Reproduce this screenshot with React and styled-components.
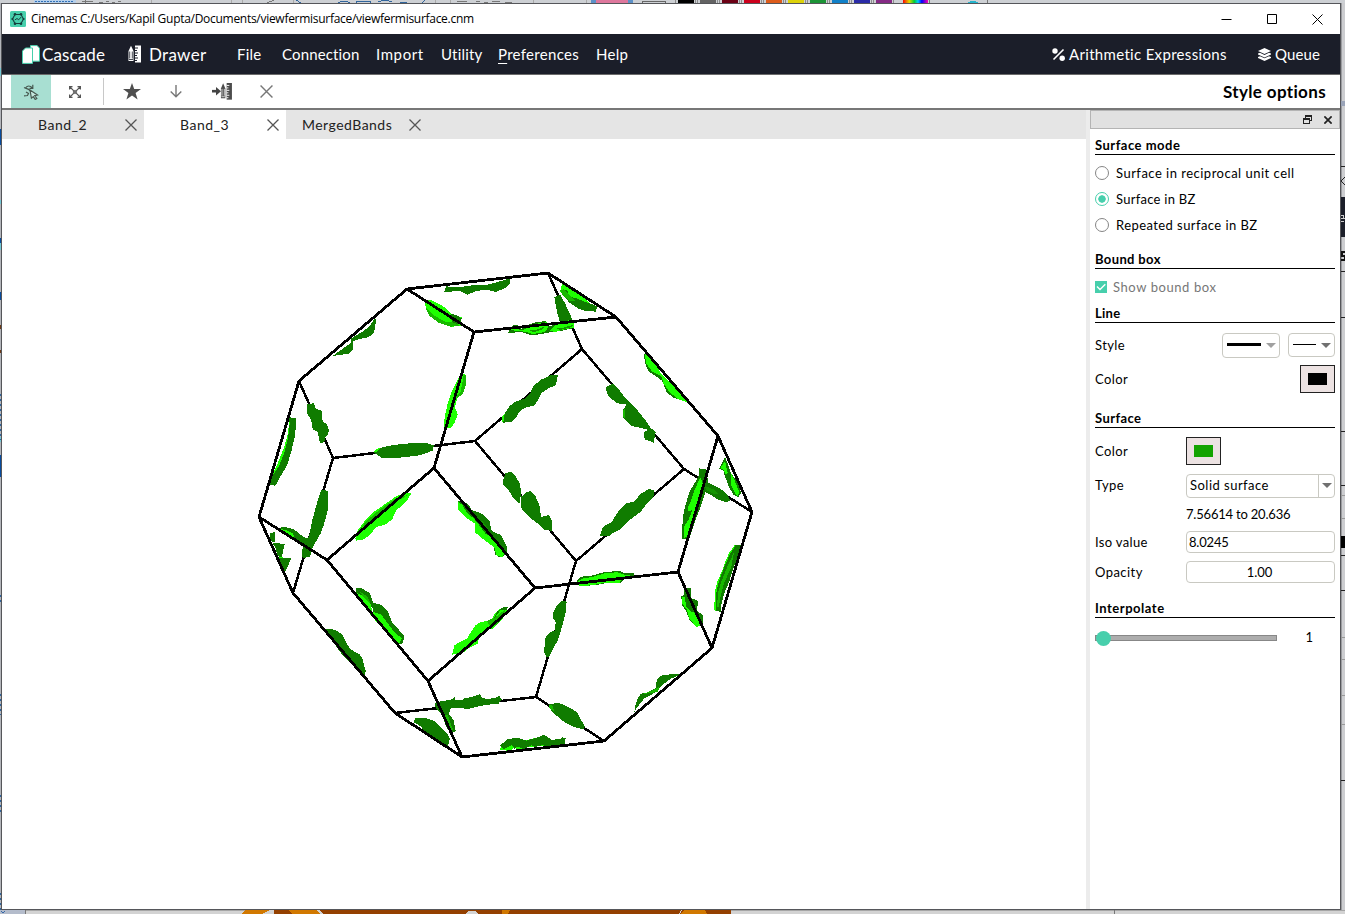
import React from 'react';
import styled, { createGlobalStyle } from 'styled-components';

const Global = createGlobalStyle`
  * { box-sizing: border-box; }
  html, body { margin: 0; padding: 0; overflow: hidden; }
  body { font-family: Lato, "Liberation Sans", sans-serif; color: #000; background: #cdd0d4; }
`;

/* ---------- shell ---------- */
const Desktop = styled.div`
  width: 1345px; height: 914px; display: grid;
  grid-template-columns: 1px 1340px 4px;
  grid-template-rows: 3px 907px 4px;
`;
const Strip = styled.svg`display: block; grid-column: ${p => p.$span ? '1 / -1' : 'auto'};`;
const Window = styled.div`
  border: 1px solid #55565a; background: #fff;
  display: flex; flex-direction: column;
`;
const T = styled.span`
  font-size: ${p => p.$s || 13}px;
  letter-spacing: ${p => p.$ls || 0}px;
  font-weight: ${p => p.$b ? 700 : 400};
  color: ${p => p.$c || 'inherit'};
  white-space: nowrap; line-height: 1;
`;
const TitleBar = styled.div`height: 30px; flex: none; display: flex; align-items: center; padding: 0 15px 0 8px;`;
const TitleText = styled(T)`font-family: "Open Sans", sans-serif; margin-left: 5px; flex: 1;`;
const WinButton = styled.svg`width: 15px; height: 15px; margin: 0 0 1px ${p => p.$gap || 0}px; flex: none;`;
const MenuBar = styled.div`
  height: 41px; flex: none; background: #1b1e29; color: #fff; border-bottom: 1px solid #6b6b6b;
  display: flex; align-items: center; padding: 0 19px 0 20px;
`;
const MenuItem = styled.div`
  display: flex; align-items: center; height: 24px; flex: none;
  width: ${p => p.$w}px; gap: ${p => p.$gap || 0}px;
  u { text-underline-offset: 3px; text-decoration-thickness: 1px; }
`;
const Spacer = styled.div`flex: 1;`;
const ToolBar = styled.div`
  height: 35px; flex: none; display: flex; align-items: center; padding: 0 14px 0 9px;
  border-bottom: 2px solid #777;
`;
const ToolButton = styled.div`
  width: ${p => p.$w}px; height: 33px; display: flex; align-items: center; justify-content: center;
  background: ${p => p.$active ? '#a8dfd2' : 'transparent'};
`;
const Divider = styled.div`width: 1px; height: 27px; background: #c8c8c8; margin: 0 7px 0 4px;`;
const Body = styled.div`flex: 1; display: flex; min-height: 0;`;
const Main = styled.div`width: 1084px; display: flex; flex-direction: column;`;
const Tabs = styled.div`height: 29px; flex: none; background: #e5e5e5; display: flex;`;
const Tab = styled.div`
  width: ${p => p.$w}px; display: flex; align-items: center; justify-content: space-between;
  padding: 0 7px 0 ${p => p.$pl}px; background: ${p => p.$active ? '#fff' : 'transparent'}; color: #222;
`;
const Splitter = styled.div`width: 4px; background: #ececec;`;
const Panel = styled.div`flex: 1; display: flex; flex-direction: column; background: #fff;`;
const PanelHead = styled.div`
  height: 19px; flex: none; background: #e1e1e1; border: 1px solid #b4b4b4;
  display: flex; align-items: center; justify-content: flex-end; gap: 12px; padding-right: 7px;
`;
const PanelBody = styled.div`padding: 0 5px; display: flex; flex-direction: column;`;
const Heading = styled.div`
  height: ${p => p.$h}px; border-bottom: 1px solid #000; padding-bottom: 2px;
  display: flex; align-items: flex-end; line-height: 1;
`;
const Row = styled.div`
  height: ${p => p.$h}px; margin-top: ${p => p.$mt || 0}px; display: flex; align-items: center;
`;
const Radio = styled.span`
  width: 14px; height: 14px; border-radius: 50%; margin-right: 7px; flex: none;
  border: 1.4px solid ${p => p.$on ? '#47cfac' : '#858585'};
  background: ${p => p.$on ? 'radial-gradient(circle, #47cfac 3.4px, #fff 4px)' : '#fff'};
`;
const Check = styled.svg`width: 12px; height: 12px; background: #47cfac; margin-right: 6px;`;
const Name = styled.div`width: 91px; display: flex; flex: none;`;
const Raised = styled(T)`padding-bottom: 2px; margin-right: ${p => p.$mr || 0}px;`;
const Swatch = styled.div`
  width: 35px; height: 28px; border: 1px solid #222; background: #ece2e2;
  display: flex; align-items: center; justify-content: center;
  &::after { content: ''; width: 19px; height: 12px; background: ${p => p.$color}; }
`;
const Field = styled.div`
  width: ${p => p.$w || 149}px; height: ${p => p.$h || 22}px; border: 1px solid #c9c9c2; border-radius: 4px;
  display: flex; align-items: center; justify-content: ${p => p.$center ? 'center' : 'space-between'};
  padding: 0 ${p => p.$center ? 4 : 3}px 0 ${p => p.$pl || 2}px; margin-left: ${p => p.$ml || 0}px; background: #fff;
`;
const StrokeSample = styled.div`width: ${p => p.$w}px; height: ${p => p.$t}px; background: #000; margin: 0 0 2px 2px;`;
const Caret = styled.div`
  border: 5px solid transparent; border-bottom: 0; border-top-color: ${p => p.$c || '#707070'};
`;
const DropEdge = styled.div`
  align-self: stretch; width: 16px; border-left: 1px solid #c9c9c2; margin-right: -3px;
  display: flex; align-items: center; justify-content: center;
`;
const Track = styled.div`
  width: 182px; height: 6px; background: #adadad; border: 1px solid #878787;
  display: flex; align-items: center;
`;
const Knob = styled.div`width: 15px; height: 15px; border-radius: 50%; background: #47cfac; flex: none;`;
const Scene = styled.svg`display: block; width: 1084px; height: 770px;`;

/* ---------- icons ---------- */
const Cross = ({ s = 12, c = '#555', w = 1.4 }) => (
  <svg width={s} height={s} viewBox="0 0 12 12" stroke={c} strokeWidth={w}><path d="M.5 .5 11.5 11.5M11.5 .5 .5 11.5" /></svg>
);
const RulerPen = ({ c = '#fff', bg = '#1b1e29' }) => (
  <>
    <path d="M.5 5.5 3 .3 5.5 5.5V15.5H.5Z" fill={c} />
    <path d="M1.7 6V13M4.3 6V13" stroke={bg} strokeWidth=".8" />
    <path d="M1 14H5" stroke={bg} strokeWidth=".8" />
    <path d="M7 0H13V17H7Z" fill={c} />
    <path d="M7 2.5H10M7 5H9M7 7.5H10M7 10H9M7 12.5H10M7 15H9" stroke={bg} strokeWidth="1" />
  </>
);

/* ---------- brillouin zone ---------- */
const V = {
  A: [407, 289], B: [548, 273], C: [616, 317], D: [474, 332], E: [299, 381], F: [333, 458],
  G: [259, 517], H: [293, 593], I: [327, 560], J: [434, 468], K: [475, 441], L: [582, 349],
  M: [684, 469], N: [718, 436], O: [752, 512], P: [678, 572], Q: [712, 648], R: [576, 561],
  S: [535, 588], T: [428, 681], U: [395, 713], W: [462, 757], X: [604, 741], Y: [536, 697],
};
const backEdges = 'EF FK FH KL KR LB LM MR MO RY YU YX'.split(' ');
const frontEdges = 'AD DC DJ IJ JS IT ST TW SP NP PQ GI AB AE EG GH HU UW WX XQ QO ON NC CB'.split(' ');
const edgePath = list => list.map(([a, b]) => `M${V[a]}L${V[b]}`).join('');

const D = '#107c00', G = '#1eff00', M = '#18b800', N = '#149600';
/* patches of the surface, grouped by quadrant; three units per pixel */
const patches = [
  [250, 260, [
    [D, '583,95 589,74 597,82 625,82 665,76 705,76 750,64 781,54 781,69 770,82 738,96 712,90 682,92 652,104 632,94'],
    [G, '525,125 540,118 555,126 575,136 592,148 605,163 635,172 632,198 605,200 575,190 545,172 527,142'],
    [D, '605,162 618,165 635,175 631,192 616,195 600,176'],
    [M, '525,138 550,165 585,185 615,188 630,198 600,200 565,188 537,166'],
    [D, '375,172 378,182 372,218 355,232 325,238 310,244 309,270 298,281 248,288 270,272 302,249 303,236 345,210 362,194'],
    [D, '172,432 192,430 196,445 215,452 218,484 230,492 237,510 234,525 226,533 223,547 210,549 203,515 188,508 183,478 172,462'],
    [G, '118,478 114,520 103,560 84,608 64,648 76,638 100,600 118,545 124,500'],
    [D, '116,472 138,474 136,525 125,570 112,615 92,648 76,677 58,674 64,652 86,620 104,575 114,535 119,490'],
    [G, '632,340 646,342 648,375 638,402 622,414 615,442 623,463 614,488 601,506 582,500 584,472 592,434 606,392'],
    [M, '641,345 647,345 648,375 638,402 622,414 617,410 632,396'],
    [D, '372,578 388,564 430,555 490,549 530,549 552,556 548,572 510,586 440,594 395,594'],
    [G, '372,575 378,568 392,563 382,575'],
  ]],
  [500, 260, [
    [D, '163,112 180,103 194,128 207,155 221,188 180,187 171,155'],
    [G, '180,95 186,71 210,82 232,98 250,112 270,130 283,137 250,135 215,118'],
    [D, '181,92 200,90 214,105 235,118 260,127 290,138 289,155 258,153 235,146 208,128'],
    [M, '180,92 192,88 210,108 230,125 208,122 190,108'],
    [G, '200,78 221,90 213,96 230,108 222,115 206,104'],
    [D, '24,218 40,195 55,196 65,207 85,194 114,185 139,184 147,200 164,194 190,180 222,180 222,204 182,213 151,217 125,222 93,226 66,217'],
    [G, '30,210 42,197 60,210 75,208 96,196 118,189 142,187 145,200 135,216 98,222 80,216'],
    [G, '150,213 164,196 190,182 221,181 221,203 185,210 168,216'],
    [N, '88,210 110,209 134,200 128,208 100,217'],
    [N, '158,207 190,203 220,194 216,201 184,209'],
    [D, '432,281 435,310 446,334 470,350 486,362 500,397 520,413 558,425 532,400 494,365 470,325'],
    [G, '434,279 459,300 483,341 501,358 532,390 561,426 535,418 508,396 490,370 484,348 457,335 439,312'],
    [D, '155,345 174,345 167,376 151,382 125,398 114,420 103,436 76,443 60,453 46,476 35,486 8,488 10,466 30,437 50,423 73,417 91,401 99,379 125,358'],
    [G, '7,469 14,461 10,488 7,487'],
    [D, '318,382 339,370 360,393 377,415 404,440 438,483 453,505 467,515 461,548 434,538 431,518 444,509 416,502 394,498 370,474 369,450 380,434 352,430 329,413 320,397'],
    [M, '368,452 374,445 374,474 369,469'],
  ]],
  [250, 470, [
    [D, '214,60 233,62 234,119 221,166 212,190 193,223 185,240 180,260 158,265 156,243 164,217 177,198 188,146 200,102'],
    [D, '90,173 102,170 130,177 153,195 180,212 184,241 160,225 130,208 94,189'],
    [G, '92,177 108,180 128,190 134,205 118,201 96,187'],
    [D, '60,190 75,186 74,215 59,214'],
    [D, '67,218 104,222 95,263 82,257 77,234'],
    [G, '82,260 95,262 120,266 95,270'],
    [D, '87,265 124,265 113,290 104,309 96,284'],
    [G, '316,205 324,180 350,145 370,126 400,106 440,78 468,68 484,70 470,94 439,121 426,149 405,164 378,171 363,192 341,208 318,212'],
    [M, '330,176 352,150 397,113 438,85 474,75 429,101 393,133'],
    [D, '624,92 641,94 657,106 664,120 681,125 700,133 719,153 723,179 738,190 753,194 771,232 769,253 750,263 736,254 729,223 704,211 677,189 674,160 640,135 624,119'],
    [G, '624,95 636,104 652,130 672,146 690,169 707,192 731,202 742,220 763,246 759,262 739,256 733,232 704,211 676,188 675,161 649,144 625,120'],
    [N, '685,151 697,152 716,180 706,185'],
    [D, '317,353 334,354 360,370 369,398 393,404 414,424 425,455 439,471 463,498 459,519 450,523 430,488 409,466 372,435 368,413 337,389 318,374'],
    [G, '319,368 339,377 361,400 367,425 393,433 410,456 431,484 455,505 447,524 425,501 400,478 367,441 321,379'],
    [M, '330,366 350,378 364,402 344,386'],
    [D, '219,475 254,479 276,492 291,522 301,538 329,553 337,566 347,602 345,626 322,600 279,557 240,504'],
    [G, '606,554 613,526 632,515 650,507 663,486 676,466 692,456 722,452 735,430 755,413 773,411 769,432 748,457 727,477 703,480 687,501 684,520 654,536 637,550'],
    [M, '710,453 735,443 764,420 769,432 740,464 722,470'],
    [D, '741,426 755,413 773,411 771,421 752,420 731,447'],
    [D, '554,700 578,692 600,691 614,681 616,690 634,691 646,684 666,681 690,672 697,684 712,687 735,684 748,678 755,688 745,702 713,704 690,708 658,716 623,715 603,715 596,731 611,751 617,782 607,790 591,775 583,755 574,730 557,714'],
    [M, '578,732 594,736 605,768 611,783 595,775 583,755'],
    [D, '490,756 497,744 525,743 551,752 574,774 591,790 600,806 594,827 575,824 551,807 532,794 511,768'],
  ]],
  [500, 470, [
    [G, '0,840 5,825 34,818 80,810 121,800 150,813 178,810 194,822 144,828 98,830 70,834 58,839 40,833 34,843'],
    [D, '0,826 23,808 52,803 78,812 108,804 132,794 154,809 180,808 188,802 197,805 193,827 171,824 144,832 130,825 106,831 95,826 71,837 54,830 43,836 36,825 12,837'],
    [D, '9,30 17,9 34,5 47,18 61,45 63,74 58,101 41,85 26,62 10,43'],
    [D, '62,80 73,74 78,65 94,64 107,80 118,105 123,140 135,139 146,135 157,153 155,182 132,179 116,163 84,138 62,112'],
    [D, '299,198 307,176 318,165 335,156 353,127 377,101 403,94 422,72 444,58 464,59 460,80 437,105 422,125 387,152 364,176 340,188 326,199'],
    [D, '230,332 244,320 280,316 313,306 359,303 373,309 402,309 404,320 374,327 362,339 320,339 291,345 238,349'],
    [G, '232,337 245,326 278,321 316,309 353,307 372,314 390,316 390,324 363,330 358,340 315,338 274,346 239,349'],
    [D, '546,207 547,181 548,144 555,109 570,62 585,38 598,15 599,7 620,5 625,42 614,74 598,121 583,159 568,205'],
    [G, '563,115 574,89 584,58 600,25 612,14 611,48 593,92 589,125 575,170 562,200 551,205 553,168 563,142'],
    [D, '557,124 577,121 566,148 555,166 548,173'],
    [D, '597,7 597,-5 617,-2 620,35 640,45 665,59 680,71 690,91 681,98 651,87 635,76 616,66'],
    [N, '615,48 640,58 658,73 641,72 618,60'],
    [D, '658,-4 675,-40 684,-17 692,8 713,37 723,69 715,82 701,75 686,49 675,19 670,1'],
    [G, '661,-6 676,-28 677,-15 683,8 678,14 670,-2'],
    [G, '694,10 704,32 718,66 713,79 706,70 692,42'],
    [G, '642,420 646,360 653,331 669,298 675,277 688,248 705,224 713,230 692,278 669,342 663,382 655,425'],
    [D, '649,422 648,373 656,337 672,292 690,252 708,224 723,224 714,260 700,294 687,337 673,369 663,408 663,427'],
    [M, '651,410 654,370 662,340 680,295 702,246 694,290 672,340 662,378 657,410'],
    [D, '544,380 552,373 553,354 572,353 573,385 586,389 593,394 592,423 609,436 609,460 599,469 587,470 569,450 559,425 546,405'],
    [G, '546,381 555,380 558,408 569,422 590,432 602,450 602,468 589,471 568,445 560,419 547,401'],
    [D, '159,430 172,404 187,392 200,395 197,426 190,455 180,492 172,513 158,540 147,562 139,561 132,545 137,501 149,487 165,481 167,457 158,441'],
    [D, '403,727 407,702 413,687 422,671 443,668 468,654 470,630 482,617 512,613 542,613 515,625 490,642 478,656 455,675 434,684 421,700 409,716'],
    [M, '432,671 466,657 479,650 474,665 450,670'],
    [D, '147,702 178,699 205,711 232,727 240,745 254,768 252,778 222,771 195,758 178,744 153,722'],
    [M, '147,703 160,708 161,723 149,716'],
  ]],
];

function FermiSurface() {
  return (
    <Scene viewBox="2 139 1084 770" shapeRendering="crispEdges">
      <path d={edgePath(backEdges)} stroke="#000" strokeWidth="2.5" fill="none" strokeLinecap="round" />
      {patches.map(([x, y, list]) => (
        <g key={`${x}-${y}`} transform={`translate(${x} ${y}) scale(.33333)`}>
          {list.map(([fill, points], i) => <polygon key={i} fill={fill} points={points} />)}
        </g>
      ))}
      <path d={edgePath(frontEdges)} stroke="#000" strokeWidth="2.8" fill="none" strokeLinecap="round" />
    </Scene>
  );
}

/* ---------- slivers of the windows behind ---------- */
const swatches = ['#000', '#636363', '#6b0014', '#cc001c', '#dd5c1c', '#ddd20a', '#1c9436', '#1180c8', '#2b2ba8', '#852a85'];
const TopStrip = () => (
  <Strip $span width="1345" height="3" viewBox="0 0 1345 3" shapeRendering="crispEdges">
    <defs><linearGradient id="rainbow"><stop offset="0" stopColor="red" /><stop offset=".25" stopColor="#dd0" /><stop offset=".45" stopColor="#0c3" /><stop offset=".6" stopColor="#0cf" /><stop offset=".75" stopColor="#00f" /><stop offset="1" stopColor="#f0a" /></linearGradient></defs>
    <path d="M0 0H1345V3H0Z" fill="#cdd0d4" />
    <path d="M34 0H76V3H34Z" fill="#b5cfea" /><path d="M35 1.5H74" stroke="#3171b8" strokeDasharray="2 1" />
    <path d="M82 1H93M85 0V3M99 2H103M106 1H109M112 2H115M118 1H121" stroke="#777" />
    <path d="M151 0V3M231 0V3M242 0V3M293 0V3M435 0V3M450 0V3M533 0V3M586 0V3" stroke="#aaa" />
    <path d="M267 3 274 0M457 1H467M476 1H480M484 2H488M492 1H500M505 2H512" stroke="#777" />
    <path d="M296 0 301 3M338 3Q344-1 350 3M356 3V1H370V3M378 2Q384-1 392 2M400 2H407M422 3 425 0" stroke="#31659c" fill="none" />
    <path d="M591 0H633V3H591Z" fill="#5c91c8" /><path d="M596 0H628V3H596Z" fill="#de789d" />
    <path d="M642 3V1.5H665V3" stroke="#666" fill="none" />
    {swatches.map((c, i) => (
      <g key={c}><path d={`M${675.5 + i * 22} 0V3M${695.5 + i * 22} 0V3`} stroke="#8c8c8c" /><path d={`M${678 + i * 22} 0h16v3h-16z`} fill={c} /></g>
    ))}
    <path d="M903 0H928V3H903Z" fill="url(#rainbow)" />
    <path d="M929.5 0V3M987.5 0V3" stroke="#777" /><path d="M967 3Q973-1 979 3Z" fill="#25b4cc" />
  </Strip>
);
const LeftStrip = () => (
  <Strip width="1" height="907" viewBox="0 3 1 907" shapeRendering="crispEdges">
    <path d="M0 3H1V910H0Z" fill="#b3b5ba" />
    <path d="M0 129H1V145H0ZM0 238H1V243H0ZM0 292H1V300H0ZM0 455H1V477H0Z" fill="#084c9e" />
    <path d="M0 68H1V76H0ZM0 200H1V204H0ZM0 243H1V250H0ZM0 437H1V442H0Z" fill="#72c9d6" />
    <path d="M0 325H1V329H0ZM0 350H1V353H0Z" fill="#6c3a16" />
    <path d="M.5 394V440M.5 595V604M.5 694V715M.5 795V815M.5 893V910" stroke="#31659c" strokeDasharray="2 3" />
  </Strip>
);
const RightStrip = () => (
  <Strip width="4" height="907" viewBox="1341 3 4 907" shapeRendering="crispEdges">
    <path d="M1341 3H1345V910H1341Z" fill="#cccdd0" />
    <path d="M1341 3H1342V910H1341Z" fill="#9b9ca0" />
    <path d="M1341 101H1345V106H1341Z" fill="#9aa4b8" />
    <path d="M1341 166.5H1345M1341 271.5H1345M1341 317.5H1345M1341 431.5H1345M1341 485.5H1345M1341 555.5H1345M1341 590.5H1345M1341 780.5H1345" stroke="#222" />
    <path d="M1345 177 1341 181 1345 185" stroke="#222" fill="none" />
    <path d="M1341 197H1345V237H1341Z" fill="#1b1e29" /><path d="M1341 215.5H1343L1344 218.5H1341M1341 221.5H1344" stroke="#ccc" fill="none" />
    <path d="M1345 252H1342V256H1345V260H1341" stroke="#111" fill="none" strokeWidth="1.5" />
    <path d="M1341 536H1345V548H1341Z" fill="#000" />
    <path d="M1341 495.5H1345M1341 518.5H1345M1341 637.5H1345M1341 659.5H1345M1341 695.5H1345M1341 724.5H1345" stroke="#999" />
  </Strip>
);
const BottomStrip = () => (
  <Strip $span width="1345" height="4" viewBox="0 910 1345 4" shapeRendering="crispEdges">
    <path d="M0 910H1345V914H0Z" fill="#d3d3d3" />
    <path d="M0 910H1345V911H0Z" fill="#a6a6a6" />
    <path d="M0 910H25V914H0Z" fill="#b4bccb" /><path d="M25.5 910V914M1114.5 910V914" stroke="#777" />
    <path d="M1 911 3 913 5 911" stroke="#3568a8" fill="none" />
    <path d="M246 910H731V914H241Z" fill="#944000" />
    <path d="M246 910H271L262 914H241ZM288 910H316L320 914H292ZM502 910H510L508 914H502ZM684 910H705L707 914H681Z" fill="#d17800" />
    <path d="M270 910H274V914H262ZM316 910H319L323 914H320ZM469 911H475L479 914H465ZM681 910H682L680 914H679Z" fill="#d3d3d3" />
  </Strip>
);

export default function App() {
  return (
    <>
      <Global />
      <Desktop>
        <TopStrip />
        <LeftStrip />
        <Window>
          <TitleBar>
            <svg width="16" height="16" viewBox="0 0 16 16">
              <rect width="16" height="16" rx="1.5" fill="#47cfac" />
              <path d="M5 3.5H11L13.5 8 11 12.5H5L2.5 8Z" fill="none" stroke="#153e3c" strokeWidth="1.1" />
              <path d="M4.8 9 7 7.5 8.7 8.8 11.2 6" fill="none" stroke="#153e3c" />
              <g fill="#153e3c"><circle cx="5" cy="3.3" r="1.3" /><circle cx="11" cy="3.3" r="1.3" /><circle cx="2.4" cy="8" r="1.1" /><circle cx="13.6" cy="8" r="1.1" /><circle cx="5" cy="12.7" r="1.3" /><circle cx="11" cy="12.7" r="1.3" /></g>
            </svg>
            <TitleText $s={12} $ls={-0.285}>Cinemas C:/Users/Kapil Gupta/Documents/viewfermisurface/viewfermisurface.cnm</TitleText>
            <WinButton viewBox="0 0 15 15" stroke="#000" fill="none"><path d="M2.5 8.5H12.5" /></WinButton>
            <WinButton $gap={30} viewBox="0 0 15 15" stroke="#000" fill="none"><path d="M3.5 3.5H12.5V12.5H3.5Z" /></WinButton>
            <WinButton $gap={31} viewBox="0 0 15 15" stroke="#000" fill="none"><path d="M2.5 3.5 12.5 13.5M12.5 3.5 2.5 13.5" /></WinButton>
          </TitleBar>
          <MenuBar>
            <MenuItem $w={106} $gap={2}>
              <svg width="18" height="19" viewBox="0 0 18 19"><path d="M8.5.6H15L17.5 3V16.2H8.5Z" fill="#fff" stroke="#47cfac" /><path d="M3.5 3H10.5V18.4H.5V6Z" fill="#fff" stroke="#47cfac" /></svg>
              <T $s={17} $ls={0.12}>Cascade</T>
            </MenuItem>
            <MenuItem $w={109} $gap={8}>
              <svg width="13" height="18" viewBox="0 0 13 17"><RulerPen /></svg>
              <T $s={17} $ls={0.3}>Drawer</T>
            </MenuItem>
            <MenuItem $w={45}><T $s={15} $ls={0.25}>File</T></MenuItem>
            <MenuItem $w={94}><T $s={15} $ls={0.15}>Connection</T></MenuItem>
            <MenuItem $w={65}><T $s={15} $ls={0.6}>Import</T></MenuItem>
            <MenuItem $w={57}><T $s={15} $ls={0.2}>Utility</T></MenuItem>
            <MenuItem $w={98}><T $s={15} $ls={0.3}><u>P</u>references</T></MenuItem>
            <MenuItem $w={40}><T $s={15} $ls={0.25}>Help</T></MenuItem>
            <Spacer />
            <MenuItem $w={206} $gap={4}>
              <svg width="13" height="13" viewBox="0 0 13 13"><path d="M1.5 11.5 11.5 1.5" stroke="#fff" strokeWidth="1.6" /><circle cx="3" cy="3" r="2.7" fill="#fff" /><circle cx="10.2" cy="10.2" r="2.7" fill="#fff" /></svg>
              <T $s={15} $ls={0.32}>Arithmetic Expressions</T>
            </MenuItem>
            <MenuItem $w={63} $gap={4}>
              <svg width="13" height="13" viewBox="0 0 13 13" fill="#fff"><path d="M6.5 0 13 3 6.5 6 0 3Z" /><path d="M0 5.5 2 4.8 6.5 7 11 4.8 13 5.5V6.5L6.5 9.5 0 6.5ZM0 9 2 8.2 6.5 10.3 11 8.2 13 9V10L6.5 13 0 10Z" /></svg>
              <T $s={15} $ls={0.1}>Queue</T>
            </MenuItem>
          </MenuBar>
          <ToolBar>
            <ToolButton $active $w={40}>
              <svg width="16" height="16" viewBox="0 0 16 16" fill="none" stroke="#46584f" strokeWidth="1.2"><path d="M2.5 4Q5.5 0 9.5 4M9.8 .8V4.3H6.5M1 3.5 2.5 4.2Q6 5 8 7.5M3 8 5.5 9.5 4.5 11.5 1 11.8" /><path d="M7 6 14.5 11 11.7 11.6 13.8 14.5 12.2 15.4 10.3 12.6 8.4 14.2Z" fill="#c7e9e0" /></svg>
            </ToolButton>
            <ToolButton $w={48}>
              <svg width="12" height="12" viewBox="0 0 12 12" fill="none" stroke="#555" strokeWidth="1.2"><path d="M.6 3.5V.6H3.5M8.5.6H11.4V3.5M11.4 8.5V11.4H8.5M3.5 11.4H.6V8.5M1 1 4.8 4.8M11 1 7.2 4.8M11 11 7.2 7.2M1 11 4.8 7.2" /><path d="M4.5 6 6 4.5 7.5 6 6 7.5Z" /></svg>
            </ToolButton>
            <Divider />
            <ToolButton $w={42}>
              <svg width="18" height="17" viewBox="0 0 18 17"><path d="M9 0 11.2 6H18L12.6 10 14.6 16.5 9 12.6 3.4 16.5 5.4 10 0 6H6.8Z" fill="#4f4f4f" /></svg>
            </ToolButton>
            <ToolButton $w={46}>
              <svg width="12" height="13" viewBox="0 0 12 13" fill="none" stroke="#777" strokeWidth="1.4"><path d="M6 0V11.5M.7 6.5 6 11.8 11.3 6.5" /></svg>
            </ToolButton>
            <ToolButton $w={45}>
              <svg width="20" height="17" viewBox="0 0 20 17"><path d="M0 8.2H6" stroke="#444" strokeWidth="2.6" /><path d="M4 4 9 8.2 4 12.6Z" fill="#444" /><g transform="translate(8.5 0) scale(.88 .98)"><RulerPen c="#4c4c4c" bg="#fff" /></g></svg>
            </ToolButton>
            <ToolButton $w={44}><Cross s={13} c="#777" w={1.3} /></ToolButton>
            <Spacer />
            <T $s={17} $ls={0.35} $b>Style options</T>
          </ToolBar>
          <Body>
            <Main>
              <Tabs>
                <Tab $w={142} $pl={36}><T $s={14} $ls={0.5}>Band_2</T><Cross w={1.3} /></Tab>
                <Tab $w={142} $pl={36} $active><T $s={14} $ls={0.5}>Band_3</T><Cross w={1.3} /></Tab>
                <Tab $w={142} $pl={16}><T $s={14} $ls={0.47}>MergedBands</T><Cross w={1.3} /></Tab>
              </Tabs>
              <FermiSurface />
            </Main>
            <Splitter />
            <Panel>
              <PanelHead>
                <svg width="9" height="9" viewBox="0 0 9 9" shapeRendering="crispEdges" fill="none" stroke="#222"><path d="M2.5 3V.5H8.5V5.5H6M2 1H9M.5 3.5H6.5V8.5H.5ZM0 4H7" /></svg>
                <Cross s={8} c="#222" w={2.6} />
              </PanelHead>
              <PanelBody>
                <Heading $h={26}><T $b $ls={0.5}>Surface mode</T></Heading>
                <Row $h={26} $mt={5}><Radio /><T $ls={0.49}>Surface in reciprocal unit cell</T></Row>
                <Row $h={26}><Radio $on /><T $ls={0.27}>Surface in BZ</T></Row>
                <Row $h={26}><Radio /><T $ls={0.43}>Repeated surface in BZ</T></Row>
                <Heading $h={31}><T $b $ls={0.37}>Bound box</T></Heading>
                <Row $h={36}>
                  <Check viewBox="0 0 12 12"><path d="M2 5.5 5 8.5 10.3 3.2" fill="none" stroke="#fff" strokeWidth="1.4" /></Check>
                  <T $c="#777" $ls={0.58}>Show bound box</T>
                </Row>
                <Heading $h={18}><T $b $ls={0.25}>Line</T></Heading>
                <Row $h={40} $mt={2}>
                  <T $ls={0.4}>Style</T><Spacer />
                  <Field $w={58} $h={25}><StrokeSample $w={34} $t={3} /><Caret $c="#a0a0a0" /></Field>
                  <Field $w={47} $h={24} $ml={8}><StrokeSample $w={23} $t={1} /><Caret /></Field>
                </Row>
                <Row $h={28}><T $ls={0.4}>Color</T><Spacer /><Swatch $color="#000" /></Row>
                <Heading $h={35}><T $b $ls={0.4}>Surface</T></Heading>
                <Row $h={28} $mt={9}><Name><T $ls={0.4}>Color</T></Name><Swatch $color="#13a300" /></Row>
                <Row $h={41}><Name><T $ls={0.4}>Type</T></Name><Field $h={24} $pl={3}><T $ls={0.48}>Solid surface</T><DropEdge><Caret /></DropEdge></Field></Row>
                <Row $h={18}><Name /><Raised $ls={-0.2}>7.56614 to 20.636</Raised></Row>
                <Row $h={36}><Name><T $ls={0.35}>Iso value</T></Name><Field><T $ls={-0.2}>8.0245</T></Field></Row>
                <Row $h={24}><Name><T $ls={0.45}>Opacity</T></Name><Field $center><T $ls={-0.1}>1.00</T></Field></Row>
                <Heading $h={34}><T $b $ls={0.52}>Interpolate</T></Heading>
                <Row $h={40}><Track><Knob /></Track><Spacer /><Raised $mr={22}>1</Raised></Row>
              </PanelBody>
            </Panel>
          </Body>
        </Window>
        <RightStrip />
        <BottomStrip />
      </Desktop>
    </>
  );
}
